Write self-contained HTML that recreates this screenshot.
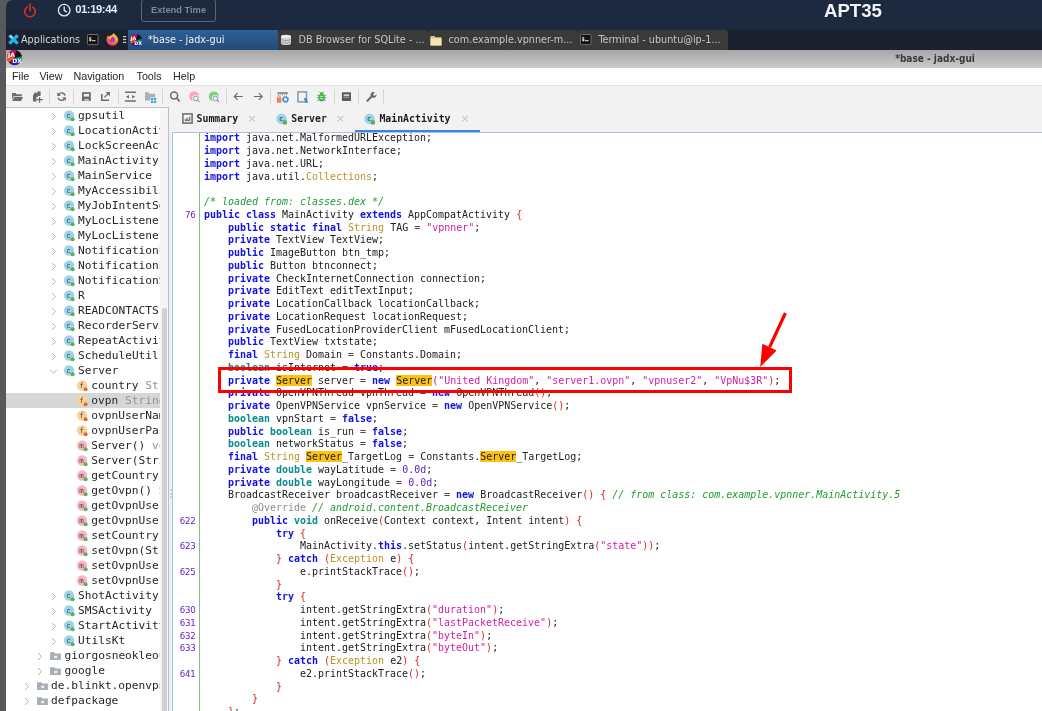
<!DOCTYPE html>
<html lang="en">
<head>
<meta charset="utf-8">
<title>*base - jadx-gui</title>
<style>
*{box-sizing:border-box;margin:0;padding:0}
html,body{width:1042px;height:711px;overflow:hidden}
body{position:relative;will-change:transform;background:#58595c;font-family:"Liberation Sans","DejaVu Sans",sans-serif;font-size:11px;color:#222}
.abs{position:absolute}
svg{display:block;overflow:visible}
/* top lab bar */
#top{left:6px;top:0;width:1036px;height:31px;background:#1d293e;border-top-left-radius:7px}
#top .clk{left:69.2px;top:2px;color:#e3eaf5;font-weight:bold;font-size:11.3px;letter-spacing:-0.45px;line-height:14px;white-space:nowrap}
#top .ext{left:135px;top:-1px;width:75px;height:22.5px;border:1px solid #5b6675;border-radius:3px;color:#7d8796;font-weight:bold;font-size:9.3px;line-height:20.5px;text-align:center;white-space:nowrap}
#top .apt{left:818px;top:-0.5px;color:#f2f4f7;font-weight:bold;font-size:18.6px;white-space:nowrap;line-height:22px}
/* xfce panel */
#panel{left:6px;top:30px;width:1036px;height:20px;background:#1c2130;font-family:"DejaVu Sans Condensed","DejaVu Sans","Liberation Sans",sans-serif;font-size:10.75px;color:#d6d6d6;white-space:nowrap}
#panel .it{position:absolute;top:0;height:19.5px;line-height:19.5px;overflow:hidden}
#panel .win{background:#3a3a3a;color:#c4c4c4;border-radius:3px 3px 0 0}
#panel .act{background:linear-gradient(#2f5f95,#244a78);color:#f0f0f0}
/* jadx window */
#title{left:6px;top:50px;width:1036px;height:18px;background:linear-gradient(#a6a6a6 0%,#b7b7b7 45%,#cacaca 100%);font-family:"DejaVu Sans Condensed","DejaVu Sans","Liberation Sans",sans-serif;font-weight:bold;font-size:10px;color:#3a3a3a;white-space:nowrap}
#menu{left:6px;top:68px;width:1036px;height:18px;background:#fff;border-bottom:1px solid #e3e3e3;font-size:10.75px;color:#262626;white-space:nowrap}
#menu span{position:absolute;top:0;line-height:17.5px}
#tool{left:6px;top:86px;width:1036px;height:22px;background:#f2f2f2}
#tool .sep{position:absolute;top:3px;width:1px;height:15px;background:#d6d6d6}
#tool svg{position:absolute}
/* tree */
#treewrap{left:6px;top:107px;width:163px;height:604px;background:#fff;border-top:1px solid #c4c4c4;border-right:1px solid #bdbdbd;overflow:hidden}
#tree{position:absolute;left:-6px;top:0.4px;width:159.6px;height:620px;overflow:hidden;font-family:"DejaVu Sans Mono","Liberation Mono",monospace;font-size:11.2px;color:#262626;white-space:nowrap}
.tr{position:relative;height:15.0px;line-height:15.0px}
.tr.sel{background:#d6d6d6}
.tr .tl{position:absolute;top:0}
.tr .ex{color:#939393}
.tr .chv{position:absolute;top:3.2px}
.tr .ico{position:absolute;top:0.6px}
#tsb{left:153.6px;top:0;width:8.4px;height:604px;background:#f5f5f5}
#tsb i{position:absolute;left:2.9px;top:199.8px;width:4.5px;height:420px;background:#d0d0d0;border-radius:2px}
#split{left:169px;top:107px;width:3.5px;height:604px;background:#f0f0f0}
/* tabs */
#tabs{left:169px;top:107px;width:873px;height:25px;background:#f2f2f2;font-family:"DejaVu Sans Mono","Liberation Mono",monospace;font-weight:bold;font-size:9.85px;color:#1c1c1c;white-space:nowrap}
#tabs span{position:absolute;top:0;line-height:23.5px}
#tabs .x{font-family:"DejaVu Sans","Liberation Sans",sans-serif;font-weight:normal;color:#c4c4c4;font-size:11px}
#tabs svg{position:absolute}
/* editor */
#ed{left:172px;top:132px;width:870px;height:579px;background:#fff;border-left:1px solid #a9c3df;border-top:1px solid #a9c3df;overflow:hidden}
#gut{left:0;top:0;padding-top:0;width:26.5px;height:579px;border-right:1px solid #7fbf86;font-family:"DejaVu Sans","Liberation Sans",sans-serif;font-size:8.6px;color:#6a1bd1;text-align:right;padding-right:3px;letter-spacing:-0.2px}
#gut .gl{height:12.75px;line-height:12.75px;position:relative;top:-0.7px}
#code{left:31px;top:-0.7px;width:840px;font-family:"DejaVu Sans Mono","Liberation Mono",monospace;font-size:9.97px;color:#202020}
#code .cl{height:12.75px;line-height:12.75px;white-space:pre}
#code b{font-weight:bold}
.k{color:#1212e4}.d{color:#0a8c8c}.f{color:#b69228}.s{color:#cf1fa2}.n{color:#5f1ccb}.c{color:#1f9c32;font-style:italic}.a{color:#8e8e8e}.p{color:#dc2424}.o{color:#5a3c3c}
mark{background:#fcc20f;color:inherit}
#box{left:218px;top:367px;width:574px;height:26px;border:3px solid #ff0000}
#arrow{left:0;top:0}
</style>
</head>
<body>
<!-- ============ lab top bar ============ -->
<div id="top" class="abs">
  <svg class="abs" style="left:16px;top:2.6px" width="16" height="16" viewBox="0 0 16 16"><path d="M5.2 4.1 A5.3 5.3 0 1 0 10.8 4.1" fill="none" stroke="#d92b2b" stroke-width="1.7" stroke-linecap="round"/><path d="M8 1.4 V7.4" stroke="#d92b2b" stroke-width="1.7" stroke-linecap="round"/></svg>
  <svg class="abs" style="left:51.3px;top:3.2px" width="14.4" height="14.4" viewBox="0 0 14 14"><circle cx="7" cy="7" r="5.6" fill="none" stroke="#e6eaf0" stroke-width="1.3"/><path d="M7 3.8 V7.2 L9.2 8.6" fill="none" stroke="#e6eaf0" stroke-width="1.3" stroke-linecap="round" stroke-linejoin="round"/></svg>
  <div class="abs clk">01:19:44</div>
  <div class="abs ext">Extend Time</div>
  <div class="abs apt">APT35</div>
</div>
<!-- ============ xfce panel ============ -->
<div id="panel" class="abs">
  <svg class="abs" style="left:1.5px;top:4px" width="11" height="11" viewBox="0 0 12 12"><path d="M1.5 1.5 L10.5 10.5 M10.5 1.5 L1.5 10.5" stroke="#25b4e6" stroke-width="3.7" stroke-linecap="butt"/><path d="M2.2 1.6 L5 4.4" stroke="#b9ecfb" stroke-width="1.4"/></svg>
  <div class="it" style="left:15px">Applications</div>
  <svg class="abs" style="left:80.6px;top:3.8px" width="11.6" height="11.2" viewBox="0 0 11.6 11.2"><rect x="0.5" y="0.5" width="10.6" height="10.2" rx="1" fill="#121212" stroke="#6f6f6f"/><text x="1.6" y="6.6" font-family="'DejaVu Sans Mono','Liberation Mono',monospace" font-weight="bold" font-size="5.6" fill="#f0f0f0">$</text><rect x="5" y="6.2" width="3.6" height="1" fill="#e8e8e8"/></svg>
  <svg class="abs" style="left:99.6px;top:3.4px" width="12.8" height="12.8" viewBox="0 0 13 13"><defs><linearGradient id="ff" x1="0.8" y1="0.05" x2="0.25" y2="1"><stop offset="0" stop-color="#ffe24a"/><stop offset="0.45" stop-color="#ff8a1e"/><stop offset="1" stop-color="#ff2f6e"/></linearGradient></defs><path d="M6.5 1.8 C7.2 0.6 8 0.2 8 0.2 C8.4 1.6 11.2 2.6 12.2 5.6 C13.2 9.2 10.4 12.8 6.6 12.8 C3 12.8 0.4 10 0.5 6.6 C0.5 4.6 1.4 3 2.2 2.2 C2.4 3 2.8 3.4 3.2 3.6 C4 2.6 5.4 2.2 6.5 1.8 Z" fill="url(#ff)"/><circle cx="6.3" cy="6.5" r="2.7" fill="#8a3fe6"/><path d="M2.8 4 C4 3.3 5.6 3.6 6.4 4.6 C5 4.6 4.6 5.8 5.2 6.6 C4 6.8 2.8 5.4 2.8 4 Z" fill="#ffb52e"/></svg>
  <svg class="abs" style="left:116.9px;top:6px" width="3.2" height="8" viewBox="0 0 3.2 8"><rect x="0" y="0" width="3.2" height="1.2" fill="#c9ccd1"/><rect x="0" y="2.9" width="3.2" height="1.2" fill="#c9ccd1"/><rect x="0" y="5.8" width="3.2" height="1.2" fill="#c9ccd1"/></svg>
  <div class="it act" style="left:121.5px;width:150px;padding-left:20.5px">*base - jadx-gui</div>
  <div class="it win" style="left:272px;width:150px;padding-left:20.5px">DB Browser for SQLite - ...</div>
  <div class="it win" style="left:422px;width:150px;padding-left:20.5px">com.example.vpnner-m...</div>
  <div class="it win" style="left:572px;width:150px;padding-left:20.5px">Terminal - ubuntu@ip-1...</div>
  <!-- jadx mini icon -->
  <svg class="abs" style="left:123.6px;top:3.7px" width="12" height="12" viewBox="0 0 16 16"><circle cx="8" cy="8" r="8" fill="#17101f"/><path d="M8 8.4 L1.2 3.8 A8 8 0 0 1 9.6 0.2 Z" fill="#c2185b"/><path d="M8 8.4 L15.9 6.6 A8 8 0 0 1 13.4 13.9 Z" fill="#0f8f78"/><path d="M8 8.4 L13.4 13.9 A8 8 0 0 1 3.6 14.7 Z" fill="#3a16c0"/><path d="M8 8.4 L2.2 13.5 A8 8 0 0 1 0.3 5.8 L1.2 3.8 Z" fill="#f4511e"/><text x="1" y="7.8" font-family="'DejaVu Sans','Liberation Sans',sans-serif" font-weight="bold" font-size="6.4" fill="#fff">JA</text><text x="5.6" y="14" font-family="'DejaVu Sans','Liberation Sans',sans-serif" font-weight="bold" font-size="6.4" fill="#fff">DX</text></svg>
  <!-- db icon -->
  <svg class="abs" style="left:274px;top:4px" width="12" height="12" viewBox="0 0 12 12"><path d="M1 2.4 C1 0.4 11 0.4 11 2.4 V9.6 C11 11.6 1 11.6 1 9.6 Z" fill="#cfcfcf"/><ellipse cx="6" cy="2.4" rx="5" ry="1.7" fill="#efefef"/><path d="M1 5 C1 7 11 7 11 5 M1 7.6 C1 9.6 11 9.6 11 7.6" fill="none" stroke="#8e8e8e" stroke-width="0.8"/></svg>
  <!-- folder icon -->
  <svg class="abs" style="left:424px;top:4.5px" width="12" height="11" viewBox="0 0 12 11"><path d="M0.5 1 H4.5 L5.5 2.2 H11.5 V10.5 H0.5 Z" fill="#d9c48f"/><rect x="0.5" y="3.4" width="11" height="7.1" fill="#f3e3b4"/></svg>
  <!-- terminal icon -->
  <svg class="abs" style="left:574.2px;top:3.8px" width="11.6" height="11.2" viewBox="0 0 11.6 11.2"><rect x="0.5" y="0.5" width="10.6" height="10.2" rx="1" fill="#121212" stroke="#6f6f6f"/><text x="1.6" y="6.6" font-family="'DejaVu Sans Mono','Liberation Mono',monospace" font-weight="bold" font-size="5.6" fill="#f0f0f0">$</text><rect x="5" y="6.2" width="3.6" height="1" fill="#e8e8e8"/></svg>
</div>
<!-- ============ window title ============ -->
<div id="title" class="abs">
  <svg class="abs" style="left:0.8px;top:0.1px" width="15" height="15" viewBox="0 0 16 16"><circle cx="8" cy="8" r="8" fill="#17101f"/><path d="M8 8.4 L1.2 3.8 A8 8 0 0 1 9.6 0.2 Z" fill="#c2185b"/><path d="M8 8.4 L15.9 6.6 A8 8 0 0 1 13.4 13.9 Z" fill="#0f8f78"/><path d="M8 8.4 L13.4 13.9 A8 8 0 0 1 3.6 14.7 Z" fill="#3a16c0"/><path d="M8 8.4 L2.2 13.5 A8 8 0 0 1 0.3 5.8 L1.2 3.8 Z" fill="#f4511e"/><text x="1" y="7.8" font-family="'DejaVu Sans','Liberation Sans',sans-serif" font-weight="bold" font-size="6.4" fill="#fff">JA</text><text x="5.6" y="14" font-family="'DejaVu Sans','Liberation Sans',sans-serif" font-weight="bold" font-size="6.4" fill="#fff">DX</text></svg>
  <div class="abs" style="left:889.2px;top:0;line-height:18px">*base - jadx-gui</div>
</div>
<!-- ============ menu ============ -->
<div id="menu" class="abs">
  <span style="left:6px">File</span><span style="left:33.4px">View</span><span style="left:67.5px">Navigation</span><span style="left:130.5px">Tools</span><span style="left:167px">Help</span>
</div>
<!-- ============ toolbar ============ -->
<div id="tool" class="abs">
<div class="sep" style="left:42.8px"></div>
<div class="sep" style="left:67.0px"></div>
<div class="sep" style="left:111.8px"></div>
<div class="sep" style="left:155.9px"></div>
<div class="sep" style="left:219.9px"></div>
<div class="sep" style="left:263.9px"></div>
<div class="sep" style="left:328.1px"></div>
<div class="sep" style="left:351.9px"></div>
<div class="sep" style="left:376.9px"></div>
<svg style="left:0;top:0" width="1036" height="22" viewBox="6 86 1036 22"><path d="M12 93 H15.6 L16.4 94.3 H21.8 V96.3 H13.5 L12 99.8 Z" fill="#6b6b6b"/><path d="M14 97.1 H23.1 L21 100.9 H12.2 Z" fill="#6b6b6b"/><path d="M37.3 91.4 H40.6 V96 H37.3 Z" fill="#6b6b6b"/><path d="M34.9 93 H37.9 V101.6 H33 V94.9 Z" fill="#6b6b6b"/><path d="M35.6 91.6 V93.4 H33.8 Z" fill="#6b6b6b"/><path d="M36.4 97 H42.9 V102.2 H36.4 Z" fill="#f2f2f2"/><path d="M39.6 97 V102.8 M36.7 99.7 H42.9" stroke="#6b6b6b" stroke-width="1.2" fill="none"/><path d="M65.2 95.6 A3.7 3.7 0 0 0 58.8 94.2" fill="none" stroke="#6b6b6b" stroke-width="1.4"/><path d="M57.3 92.3 V95.9 H60.9 Z" fill="#6b6b6b"/><path d="M58 97.6 A3.7 3.7 0 0 0 64.4 99" fill="none" stroke="#6b6b6b" stroke-width="1.4"/><path d="M65.9 100.9 V97.3 H62.3 Z" fill="#6b6b6b"/><rect x="82" y="92.2" width="8.8" height="8.8" fill="#6b6b6b"/><rect x="83.7" y="93.9" width="5.4" height="2.7" fill="#ececec"/><rect x="84.6" y="99" width="3.9" height="2.1" fill="#ececec"/><rect x="85.4" y="99.8" width="2.3" height="0.8" fill="#6b6b6b"/><path d="M101.8 94 V100.3 H109" fill="none" stroke="#6b6b6b" stroke-width="1.5"/><path d="M104.4 97.4 L109.2 92.6" stroke="#6b6b6b" stroke-width="1.3"/><path d="M105.6 92.1 H109.9 V96.4 Z" fill="#6b6b6b"/><path d="M125.1 92.15 H135.9 M125.1 101.05 H135.9" stroke="#6b6b6b" stroke-width="1.5"/><path d="M126 96.8 L129 95 V98.6 Z M135.1 96.8 L132.1 95 V98.6 Z" fill="#6b6b6b"/><path d="M145 92.3 H148.4 L149.6 93.7 H155.2 V100.6 H145 Z" fill="#a7b1bb"/><rect x="150.4" y="97.3" width="6.2" height="6.1" fill="#f2f2f2"/><rect x="151" y="97.9" width="2.2" height="2.2" fill="#2fa8e4"/><rect x="153.9" y="97.9" width="2.2" height="2.2" fill="#2fa8e4"/><rect x="151" y="100.8" width="2.2" height="2.2" fill="#2fa8e4"/><rect x="153.9" y="100.8" width="2.2" height="2.2" fill="#2fa8e4"/><circle cx="174.1" cy="95.5" r="3.5" fill="none" stroke="#6b6b6b" stroke-width="1.5"/><path d="M176.6 98 L179.6 101.4" stroke="#6b6b6b" stroke-width="1.7"/><circle cx="194.2" cy="96.4" r="5" fill="#f6a8b6"/><circle cx="195.8" cy="98.5" r="3.6" fill="#f2f2f2"/><path d="M196.2 100.4 L198.2 102.6 L200.6 104 L199.6 98.6 Z" fill="#f2f2f2"/><circle cx="195.8" cy="98.5" r="2.3" fill="none" stroke="#8c9aa8" stroke-width="1"/><path d="M197.5 100.2 L199.6 102.2" stroke="#8c9aa8" stroke-width="1.1"/><circle cx="213.8" cy="96.4" r="5" fill="#84cc80"/><circle cx="215.4" cy="98.5" r="3.6" fill="#f2f2f2"/><path d="M215.8 100.4 L217.8 102.6 L220.2 104 L219.2 98.6 Z" fill="#f2f2f2"/><circle cx="215.4" cy="98.5" r="2.3" fill="none" stroke="#8c9aa8" stroke-width="1"/><path d="M217.1 100.2 L219.2 102.2" stroke="#8c9aa8" stroke-width="1.1"/><path d="M234.4 96.5 H242.7 M237.6 93.2 L234.3 96.5 L237.6 99.8" fill="none" stroke="#6b6b6b" stroke-width="1.2"/><path d="M253.8 96.5 H262.1 M258.9 93.2 L262.2 96.5 L258.9 99.8" fill="none" stroke="#6b6b6b" stroke-width="1.2"/><rect x="277.4" y="92" width="10.5" height="2" fill="#8a98a6"/><path d="M278.4 94 V95.6 M280.4 94 V95.2 M282.4 94 V95.6 M284.4 94 V95.2 M286.4 94 V95.6" stroke="#8a98a6" stroke-width="0.9"/><rect x="276.9" y="97.6" width="4.4" height="5.1" rx="0.5" fill="#f2814e"/><path d="M277.9 97.8 V96.9 A1.2 1.2 0 0 1 280.3 96.9 V97.8" fill="none" stroke="#f2814e" stroke-width="0.9"/><circle cx="285.5" cy="99.4" r="2.2" fill="none" stroke="#3b93d8" stroke-width="1.3"/><circle cx="285.5" cy="99.4" r="2.9" fill="none" stroke="#3b93d8" stroke-width="1.2" stroke-dasharray="1.1 1.18"/><rect x="297.9" y="91.9" width="8.6" height="10" fill="none" stroke="#8e9dab" stroke-width="1.6"/><path d="M302.6 97.2 H308.2 V103.4 H302.6 Z" fill="#f2f2f2" opacity="0"/><path d="M303.7 98 L306.4 98.6 L308 102.8 L305.6 102.6 Z" fill="#2a86c8"/><ellipse cx="321.6" cy="97.6" rx="3.1" ry="3.9" fill="#4caf50"/><ellipse cx="321.6" cy="93.8" rx="2" ry="1.5" fill="#4caf50"/><path d="M317.2 95 L319.2 96 M326 95 L324 96 M317 97.8 H319 M326.2 97.8 H324.2 M317.4 100.8 L319.2 99.6 M325.8 100.8 L324 99.6 M319.6 91.6 L320.6 92.8 M323.6 91.6 L322.6 92.8" stroke="#4caf50" stroke-width="1"/><path d="M320.2 96.4 H323 M320.2 98.6 H323" stroke="#e6f4e6" stroke-width="0.9"/><rect x="341.9" y="92.2" width="9.1" height="8.7" rx="0.5" fill="#5c5c5c"/><rect x="343.7" y="94.4" width="5.5" height="1.5" fill="#e2e2e2"/><rect x="343.7" y="96.7" width="5.5" height="1" fill="#a9a9a9"/><path d="M367.4 100.7 L371.8 96.3" stroke="#6b6b6b" stroke-width="2.1" stroke-linecap="round"/><path d="M376.4 94.2 L374.6 96 L373 94.6 L374.6 92.8 L374 91.9 A3 3 0 1 0 376.4 94.2 Z" fill="#6b6b6b"/></svg>
</div>
<!-- ============ tree ============ -->
<div id="treewrap" class="abs">
  <div id="tree">
<div class="tr"><svg class="chv" style="left:48.6px" width="9" height="9" viewBox="0 0 9 9"><path d="M3 1 L6.5 4.5 L3 8" fill="none" stroke="#adadad" stroke-width="0.95"/></svg><svg class="ico" style="left:62.8px" width="14" height="14" viewBox="0 0 14 14"><circle cx="6.1" cy="6.5" r="5.15" fill="#9ed2e8"/><text x="5.6" y="9.2" font-family="'DejaVu Sans Mono','Liberation Mono',monospace" font-size="7.5" fill="#2f5560" text-anchor="middle">c</text><circle cx="9.6" cy="10.2" r="2.05" fill="#59b14f"/></svg><span class="tl" style="left:78.0px">gpsutil</span></div>
<div class="tr"><svg class="chv" style="left:48.6px" width="9" height="9" viewBox="0 0 9 9"><path d="M3 1 L6.5 4.5 L3 8" fill="none" stroke="#adadad" stroke-width="0.95"/></svg><svg class="ico" style="left:62.8px" width="14" height="14" viewBox="0 0 14 14"><circle cx="6.1" cy="6.5" r="5.15" fill="#9ed2e8"/><text x="5.6" y="9.2" font-family="'DejaVu Sans Mono','Liberation Mono',monospace" font-size="7.5" fill="#2f5560" text-anchor="middle">c</text><circle cx="9.6" cy="10.2" r="2.05" fill="#59b14f"/></svg><span class="tl" style="left:78.0px">LocationActivity</span></div>
<div class="tr"><svg class="chv" style="left:48.6px" width="9" height="9" viewBox="0 0 9 9"><path d="M3 1 L6.5 4.5 L3 8" fill="none" stroke="#adadad" stroke-width="0.95"/></svg><svg class="ico" style="left:62.8px" width="14" height="14" viewBox="0 0 14 14"><circle cx="6.1" cy="6.5" r="5.15" fill="#9ed2e8"/><text x="5.6" y="9.2" font-family="'DejaVu Sans Mono','Liberation Mono',monospace" font-size="7.5" fill="#2f5560" text-anchor="middle">c</text><circle cx="9.6" cy="10.2" r="2.05" fill="#59b14f"/></svg><span class="tl" style="left:78.0px">LockScreenActivity</span></div>
<div class="tr"><svg class="chv" style="left:48.6px" width="9" height="9" viewBox="0 0 9 9"><path d="M3 1 L6.5 4.5 L3 8" fill="none" stroke="#adadad" stroke-width="0.95"/></svg><svg class="ico" style="left:62.8px" width="14" height="14" viewBox="0 0 14 14"><circle cx="6.1" cy="6.5" r="5.15" fill="#9ed2e8"/><text x="5.6" y="9.2" font-family="'DejaVu Sans Mono','Liberation Mono',monospace" font-size="7.5" fill="#2f5560" text-anchor="middle">c</text><circle cx="9.6" cy="10.2" r="2.05" fill="#59b14f"/></svg><span class="tl" style="left:78.0px">MainActivity</span></div>
<div class="tr"><svg class="chv" style="left:48.6px" width="9" height="9" viewBox="0 0 9 9"><path d="M3 1 L6.5 4.5 L3 8" fill="none" stroke="#adadad" stroke-width="0.95"/></svg><svg class="ico" style="left:62.8px" width="14" height="14" viewBox="0 0 14 14"><circle cx="6.1" cy="6.5" r="5.15" fill="#9ed2e8"/><text x="5.6" y="9.2" font-family="'DejaVu Sans Mono','Liberation Mono',monospace" font-size="7.5" fill="#2f5560" text-anchor="middle">c</text><circle cx="9.6" cy="10.2" r="2.05" fill="#59b14f"/></svg><span class="tl" style="left:78.0px">MainService</span></div>
<div class="tr"><svg class="chv" style="left:48.6px" width="9" height="9" viewBox="0 0 9 9"><path d="M3 1 L6.5 4.5 L3 8" fill="none" stroke="#adadad" stroke-width="0.95"/></svg><svg class="ico" style="left:62.8px" width="14" height="14" viewBox="0 0 14 14"><circle cx="6.1" cy="6.5" r="5.15" fill="#9ed2e8"/><text x="5.6" y="9.2" font-family="'DejaVu Sans Mono','Liberation Mono',monospace" font-size="7.5" fill="#2f5560" text-anchor="middle">c</text><circle cx="9.6" cy="10.2" r="2.05" fill="#59b14f"/></svg><span class="tl" style="left:78.0px">MyAccessibilityService</span></div>
<div class="tr"><svg class="chv" style="left:48.6px" width="9" height="9" viewBox="0 0 9 9"><path d="M3 1 L6.5 4.5 L3 8" fill="none" stroke="#adadad" stroke-width="0.95"/></svg><svg class="ico" style="left:62.8px" width="14" height="14" viewBox="0 0 14 14"><circle cx="6.1" cy="6.5" r="5.15" fill="#9ed2e8"/><text x="5.6" y="9.2" font-family="'DejaVu Sans Mono','Liberation Mono',monospace" font-size="7.5" fill="#2f5560" text-anchor="middle">c</text><circle cx="9.6" cy="10.2" r="2.05" fill="#59b14f"/></svg><span class="tl" style="left:78.0px">MyJobIntentService</span></div>
<div class="tr"><svg class="chv" style="left:48.6px" width="9" height="9" viewBox="0 0 9 9"><path d="M3 1 L6.5 4.5 L3 8" fill="none" stroke="#adadad" stroke-width="0.95"/></svg><svg class="ico" style="left:62.8px" width="14" height="14" viewBox="0 0 14 14"><circle cx="6.1" cy="6.5" r="5.15" fill="#9ed2e8"/><text x="5.6" y="9.2" font-family="'DejaVu Sans Mono','Liberation Mono',monospace" font-size="7.5" fill="#2f5560" text-anchor="middle">c</text><circle cx="9.6" cy="10.2" r="2.05" fill="#59b14f"/></svg><span class="tl" style="left:78.0px">MyLocListener</span></div>
<div class="tr"><svg class="chv" style="left:48.6px" width="9" height="9" viewBox="0 0 9 9"><path d="M3 1 L6.5 4.5 L3 8" fill="none" stroke="#adadad" stroke-width="0.95"/></svg><svg class="ico" style="left:62.8px" width="14" height="14" viewBox="0 0 14 14"><circle cx="6.1" cy="6.5" r="5.15" fill="#9ed2e8"/><text x="5.6" y="9.2" font-family="'DejaVu Sans Mono','Liberation Mono',monospace" font-size="7.5" fill="#2f5560" text-anchor="middle">c</text><circle cx="9.6" cy="10.2" r="2.05" fill="#59b14f"/></svg><span class="tl" style="left:78.0px">MyLocListener2</span></div>
<div class="tr"><svg class="chv" style="left:48.6px" width="9" height="9" viewBox="0 0 9 9"><path d="M3 1 L6.5 4.5 L3 8" fill="none" stroke="#adadad" stroke-width="0.95"/></svg><svg class="ico" style="left:62.8px" width="14" height="14" viewBox="0 0 14 14"><circle cx="6.1" cy="6.5" r="5.15" fill="#9ed2e8"/><text x="5.6" y="9.2" font-family="'DejaVu Sans Mono','Liberation Mono',monospace" font-size="7.5" fill="#2f5560" text-anchor="middle">c</text><circle cx="9.6" cy="10.2" r="2.05" fill="#59b14f"/></svg><span class="tl" style="left:78.0px">NotificationListener</span></div>
<div class="tr"><svg class="chv" style="left:48.6px" width="9" height="9" viewBox="0 0 9 9"><path d="M3 1 L6.5 4.5 L3 8" fill="none" stroke="#adadad" stroke-width="0.95"/></svg><svg class="ico" style="left:62.8px" width="14" height="14" viewBox="0 0 14 14"><circle cx="6.1" cy="6.5" r="5.15" fill="#9ed2e8"/><text x="5.6" y="9.2" font-family="'DejaVu Sans Mono','Liberation Mono',monospace" font-size="7.5" fill="#2f5560" text-anchor="middle">c</text><circle cx="9.6" cy="10.2" r="2.05" fill="#59b14f"/></svg><span class="tl" style="left:78.0px">NotificationListener2</span></div>
<div class="tr"><svg class="chv" style="left:48.6px" width="9" height="9" viewBox="0 0 9 9"><path d="M3 1 L6.5 4.5 L3 8" fill="none" stroke="#adadad" stroke-width="0.95"/></svg><svg class="ico" style="left:62.8px" width="14" height="14" viewBox="0 0 14 14"><circle cx="6.1" cy="6.5" r="5.15" fill="#9ed2e8"/><text x="5.6" y="9.2" font-family="'DejaVu Sans Mono','Liberation Mono',monospace" font-size="7.5" fill="#2f5560" text-anchor="middle">c</text><circle cx="9.6" cy="10.2" r="2.05" fill="#59b14f"/></svg><span class="tl" style="left:78.0px">NotificationService</span></div>
<div class="tr"><svg class="chv" style="left:48.6px" width="9" height="9" viewBox="0 0 9 9"><path d="M3 1 L6.5 4.5 L3 8" fill="none" stroke="#adadad" stroke-width="0.95"/></svg><svg class="ico" style="left:62.8px" width="14" height="14" viewBox="0 0 14 14"><circle cx="6.1" cy="6.5" r="5.15" fill="#9ed2e8"/><text x="5.6" y="9.2" font-family="'DejaVu Sans Mono','Liberation Mono',monospace" font-size="7.5" fill="#2f5560" text-anchor="middle">c</text><circle cx="9.6" cy="10.2" r="2.05" fill="#59b14f"/></svg><span class="tl" style="left:78.0px">R</span></div>
<div class="tr"><svg class="chv" style="left:48.6px" width="9" height="9" viewBox="0 0 9 9"><path d="M3 1 L6.5 4.5 L3 8" fill="none" stroke="#adadad" stroke-width="0.95"/></svg><svg class="ico" style="left:62.8px" width="14" height="14" viewBox="0 0 14 14"><circle cx="6.1" cy="6.5" r="5.15" fill="#9ed2e8"/><text x="5.6" y="9.2" font-family="'DejaVu Sans Mono','Liberation Mono',monospace" font-size="7.5" fill="#2f5560" text-anchor="middle">c</text><circle cx="9.6" cy="10.2" r="2.05" fill="#59b14f"/></svg><span class="tl" style="left:78.0px">READCONTACTS</span></div>
<div class="tr"><svg class="chv" style="left:48.6px" width="9" height="9" viewBox="0 0 9 9"><path d="M3 1 L6.5 4.5 L3 8" fill="none" stroke="#adadad" stroke-width="0.95"/></svg><svg class="ico" style="left:62.8px" width="14" height="14" viewBox="0 0 14 14"><circle cx="6.1" cy="6.5" r="5.15" fill="#9ed2e8"/><text x="5.6" y="9.2" font-family="'DejaVu Sans Mono','Liberation Mono',monospace" font-size="7.5" fill="#2f5560" text-anchor="middle">c</text><circle cx="9.6" cy="10.2" r="2.05" fill="#59b14f"/></svg><span class="tl" style="left:78.0px">RecorderService</span></div>
<div class="tr"><svg class="chv" style="left:48.6px" width="9" height="9" viewBox="0 0 9 9"><path d="M3 1 L6.5 4.5 L3 8" fill="none" stroke="#adadad" stroke-width="0.95"/></svg><svg class="ico" style="left:62.8px" width="14" height="14" viewBox="0 0 14 14"><circle cx="6.1" cy="6.5" r="5.15" fill="#9ed2e8"/><text x="5.6" y="9.2" font-family="'DejaVu Sans Mono','Liberation Mono',monospace" font-size="7.5" fill="#2f5560" text-anchor="middle">c</text><circle cx="9.6" cy="10.2" r="2.05" fill="#59b14f"/></svg><span class="tl" style="left:78.0px">RepeatActivity</span></div>
<div class="tr"><svg class="chv" style="left:48.6px" width="9" height="9" viewBox="0 0 9 9"><path d="M3 1 L6.5 4.5 L3 8" fill="none" stroke="#adadad" stroke-width="0.95"/></svg><svg class="ico" style="left:62.8px" width="14" height="14" viewBox="0 0 14 14"><circle cx="6.1" cy="6.5" r="5.15" fill="#9ed2e8"/><text x="5.6" y="9.2" font-family="'DejaVu Sans Mono','Liberation Mono',monospace" font-size="7.5" fill="#2f5560" text-anchor="middle">c</text><circle cx="9.6" cy="10.2" r="2.05" fill="#59b14f"/></svg><span class="tl" style="left:78.0px">ScheduleUtils</span></div>
<div class="tr"><svg class="chv" style="left:48.8px" width="9" height="9" viewBox="0 0 9 9"><path d="M1.2 2.8 L4.5 6.1 L7.8 2.8" fill="none" stroke="#adadad" stroke-width="0.95"/></svg><svg class="ico" style="left:62.8px" width="14" height="14" viewBox="0 0 14 14"><circle cx="6.1" cy="6.5" r="5.15" fill="#9ed2e8"/><text x="5.6" y="9.2" font-family="'DejaVu Sans Mono','Liberation Mono',monospace" font-size="7.5" fill="#2f5560" text-anchor="middle">c</text><circle cx="9.6" cy="10.2" r="2.05" fill="#59b14f"/></svg><span class="tl" style="left:78.0px">Server</span></div>
<div class="tr"><svg class="ico" style="left:75.7px" width="14" height="14" viewBox="0 0 14 14"><circle cx="6.1" cy="6.5" r="5.15" fill="#f5d49a"/><text x="5.6" y="9.2" font-family="'DejaVu Sans Mono','Liberation Mono',monospace" font-size="7.5" fill="#5e4a2a" text-anchor="middle">f</text><circle cx="9.6" cy="10.2" r="2.05" fill="#e8692c"/></svg><span class="tl" style="left:91.3px">country<span class="ex"> String</span></span></div>
<div class="tr sel"><svg class="ico" style="left:75.7px" width="14" height="14" viewBox="0 0 14 14"><circle cx="6.1" cy="6.5" r="5.15" fill="#f5d49a"/><text x="5.6" y="9.2" font-family="'DejaVu Sans Mono','Liberation Mono',monospace" font-size="7.5" fill="#5e4a2a" text-anchor="middle">f</text><circle cx="9.6" cy="10.2" r="2.05" fill="#e8692c"/></svg><span class="tl" style="left:91.3px">ovpn<span class="ex"> String</span></span></div>
<div class="tr"><svg class="ico" style="left:75.7px" width="14" height="14" viewBox="0 0 14 14"><circle cx="6.1" cy="6.5" r="5.15" fill="#f5d49a"/><text x="5.6" y="9.2" font-family="'DejaVu Sans Mono','Liberation Mono',monospace" font-size="7.5" fill="#5e4a2a" text-anchor="middle">f</text><circle cx="9.6" cy="10.2" r="2.05" fill="#e8692c"/></svg><span class="tl" style="left:91.3px">ovpnUserName<span class="ex"> String</span></span></div>
<div class="tr"><svg class="ico" style="left:75.7px" width="14" height="14" viewBox="0 0 14 14"><circle cx="6.1" cy="6.5" r="5.15" fill="#f5d49a"/><text x="5.6" y="9.2" font-family="'DejaVu Sans Mono','Liberation Mono',monospace" font-size="7.5" fill="#5e4a2a" text-anchor="middle">f</text><circle cx="9.6" cy="10.2" r="2.05" fill="#e8692c"/></svg><span class="tl" style="left:91.3px">ovpnUserPassword<span class="ex"> String</span></span></div>
<div class="tr"><svg class="ico" style="left:75.7px" width="14" height="14" viewBox="0 0 14 14"><circle cx="6.1" cy="6.5" r="5.15" fill="#f7b6c4"/><text x="5.6" y="9.2" font-family="'DejaVu Sans Mono','Liberation Mono',monospace" font-size="7.5" fill="#5e3038" text-anchor="middle">m</text><circle cx="9.6" cy="10.2" r="2.05" fill="#59b14f"/></svg><span class="tl" style="left:91.3px">Server()<span class="ex"> void</span></span></div>
<div class="tr"><svg class="ico" style="left:75.7px" width="14" height="14" viewBox="0 0 14 14"><circle cx="6.1" cy="6.5" r="5.15" fill="#f7b6c4"/><text x="5.6" y="9.2" font-family="'DejaVu Sans Mono','Liberation Mono',monospace" font-size="7.5" fill="#5e3038" text-anchor="middle">m</text><circle cx="9.6" cy="10.2" r="2.05" fill="#59b14f"/></svg><span class="tl" style="left:91.3px">Server(String, String, String, String)<span class="ex"> void</span></span></div>
<div class="tr"><svg class="ico" style="left:75.7px" width="14" height="14" viewBox="0 0 14 14"><circle cx="6.1" cy="6.5" r="5.15" fill="#f7b6c4"/><text x="5.6" y="9.2" font-family="'DejaVu Sans Mono','Liberation Mono',monospace" font-size="7.5" fill="#5e3038" text-anchor="middle">m</text><circle cx="9.6" cy="10.2" r="2.05" fill="#59b14f"/></svg><span class="tl" style="left:91.3px">getCountry()<span class="ex"> String</span></span></div>
<div class="tr"><svg class="ico" style="left:75.7px" width="14" height="14" viewBox="0 0 14 14"><circle cx="6.1" cy="6.5" r="5.15" fill="#f7b6c4"/><text x="5.6" y="9.2" font-family="'DejaVu Sans Mono','Liberation Mono',monospace" font-size="7.5" fill="#5e3038" text-anchor="middle">m</text><circle cx="9.6" cy="10.2" r="2.05" fill="#59b14f"/></svg><span class="tl" style="left:91.3px">getOvpn()<span class="ex"> String</span></span></div>
<div class="tr"><svg class="ico" style="left:75.7px" width="14" height="14" viewBox="0 0 14 14"><circle cx="6.1" cy="6.5" r="5.15" fill="#f7b6c4"/><text x="5.6" y="9.2" font-family="'DejaVu Sans Mono','Liberation Mono',monospace" font-size="7.5" fill="#5e3038" text-anchor="middle">m</text><circle cx="9.6" cy="10.2" r="2.05" fill="#59b14f"/></svg><span class="tl" style="left:91.3px">getOvpnUserName()<span class="ex"> String</span></span></div>
<div class="tr"><svg class="ico" style="left:75.7px" width="14" height="14" viewBox="0 0 14 14"><circle cx="6.1" cy="6.5" r="5.15" fill="#f7b6c4"/><text x="5.6" y="9.2" font-family="'DejaVu Sans Mono','Liberation Mono',monospace" font-size="7.5" fill="#5e3038" text-anchor="middle">m</text><circle cx="9.6" cy="10.2" r="2.05" fill="#59b14f"/></svg><span class="tl" style="left:91.3px">getOvpnUserPassword()<span class="ex"> String</span></span></div>
<div class="tr"><svg class="ico" style="left:75.7px" width="14" height="14" viewBox="0 0 14 14"><circle cx="6.1" cy="6.5" r="5.15" fill="#f7b6c4"/><text x="5.6" y="9.2" font-family="'DejaVu Sans Mono','Liberation Mono',monospace" font-size="7.5" fill="#5e3038" text-anchor="middle">m</text><circle cx="9.6" cy="10.2" r="2.05" fill="#59b14f"/></svg><span class="tl" style="left:91.3px">setCountry(String)<span class="ex"> void</span></span></div>
<div class="tr"><svg class="ico" style="left:75.7px" width="14" height="14" viewBox="0 0 14 14"><circle cx="6.1" cy="6.5" r="5.15" fill="#f7b6c4"/><text x="5.6" y="9.2" font-family="'DejaVu Sans Mono','Liberation Mono',monospace" font-size="7.5" fill="#5e3038" text-anchor="middle">m</text><circle cx="9.6" cy="10.2" r="2.05" fill="#59b14f"/></svg><span class="tl" style="left:91.3px">setOvpn(String)<span class="ex"> void</span></span></div>
<div class="tr"><svg class="ico" style="left:75.7px" width="14" height="14" viewBox="0 0 14 14"><circle cx="6.1" cy="6.5" r="5.15" fill="#f7b6c4"/><text x="5.6" y="9.2" font-family="'DejaVu Sans Mono','Liberation Mono',monospace" font-size="7.5" fill="#5e3038" text-anchor="middle">m</text><circle cx="9.6" cy="10.2" r="2.05" fill="#59b14f"/></svg><span class="tl" style="left:91.3px">setOvpnUserName(String)<span class="ex"> void</span></span></div>
<div class="tr"><svg class="ico" style="left:75.7px" width="14" height="14" viewBox="0 0 14 14"><circle cx="6.1" cy="6.5" r="5.15" fill="#f7b6c4"/><text x="5.6" y="9.2" font-family="'DejaVu Sans Mono','Liberation Mono',monospace" font-size="7.5" fill="#5e3038" text-anchor="middle">m</text><circle cx="9.6" cy="10.2" r="2.05" fill="#59b14f"/></svg><span class="tl" style="left:91.3px">setOvpnUserPassword(String)<span class="ex"> void</span></span></div>
<div class="tr"><svg class="chv" style="left:48.6px" width="9" height="9" viewBox="0 0 9 9"><path d="M3 1 L6.5 4.5 L3 8" fill="none" stroke="#adadad" stroke-width="0.95"/></svg><svg class="ico" style="left:62.8px" width="14" height="14" viewBox="0 0 14 14"><circle cx="6.1" cy="6.5" r="5.15" fill="#9ed2e8"/><text x="5.6" y="9.2" font-family="'DejaVu Sans Mono','Liberation Mono',monospace" font-size="7.5" fill="#2f5560" text-anchor="middle">c</text><circle cx="9.6" cy="10.2" r="2.05" fill="#59b14f"/></svg><span class="tl" style="left:78.0px">ShotActivity</span></div>
<div class="tr"><svg class="chv" style="left:48.6px" width="9" height="9" viewBox="0 0 9 9"><path d="M3 1 L6.5 4.5 L3 8" fill="none" stroke="#adadad" stroke-width="0.95"/></svg><svg class="ico" style="left:62.8px" width="14" height="14" viewBox="0 0 14 14"><circle cx="6.1" cy="6.5" r="5.15" fill="#9ed2e8"/><text x="5.6" y="9.2" font-family="'DejaVu Sans Mono','Liberation Mono',monospace" font-size="7.5" fill="#2f5560" text-anchor="middle">c</text><circle cx="9.6" cy="10.2" r="2.05" fill="#59b14f"/></svg><span class="tl" style="left:78.0px">SMSActivity</span></div>
<div class="tr"><svg class="chv" style="left:48.6px" width="9" height="9" viewBox="0 0 9 9"><path d="M3 1 L6.5 4.5 L3 8" fill="none" stroke="#adadad" stroke-width="0.95"/></svg><svg class="ico" style="left:62.8px" width="14" height="14" viewBox="0 0 14 14"><circle cx="6.1" cy="6.5" r="5.15" fill="#9ed2e8"/><text x="5.6" y="9.2" font-family="'DejaVu Sans Mono','Liberation Mono',monospace" font-size="7.5" fill="#2f5560" text-anchor="middle">c</text><circle cx="9.6" cy="10.2" r="2.05" fill="#59b14f"/></svg><span class="tl" style="left:78.0px">StartActivity</span></div>
<div class="tr"><svg class="chv" style="left:48.6px" width="9" height="9" viewBox="0 0 9 9"><path d="M3 1 L6.5 4.5 L3 8" fill="none" stroke="#adadad" stroke-width="0.95"/></svg><svg class="ico" style="left:62.8px" width="14" height="14" viewBox="0 0 14 14"><circle cx="6.1" cy="6.5" r="5.15" fill="#9ed2e8"/><text x="5.6" y="9.2" font-family="'DejaVu Sans Mono','Liberation Mono',monospace" font-size="7.5" fill="#2f5560" text-anchor="middle">c</text><circle cx="9.6" cy="10.2" r="2.05" fill="#59b14f"/></svg><span class="tl" style="left:78.0px">UtilsKt</span></div>
<div class="tr"><svg class="chv" style="left:35.2px" width="9" height="9" viewBox="0 0 9 9"><path d="M3 1 L6.5 4.5 L3 8" fill="none" stroke="#adadad" stroke-width="0.95"/></svg><svg class="ico" style="left:50.0px" width="14" height="14" viewBox="0 0 14 14"><path d="M0 3.2 H4.4 L5.6 4.5 H10.9 V10.9 H0 Z" fill="#a9afb6"/><rect x="4.2" y="6.8" width="3" height="2.4" fill="#ffffff" opacity="0.8"/></svg><span class="tl" style="left:64.5px">giorgosneokleous</span></div>
<div class="tr"><svg class="chv" style="left:35.2px" width="9" height="9" viewBox="0 0 9 9"><path d="M3 1 L6.5 4.5 L3 8" fill="none" stroke="#adadad" stroke-width="0.95"/></svg><svg class="ico" style="left:50.0px" width="14" height="14" viewBox="0 0 14 14"><path d="M0 3.2 H4.4 L5.6 4.5 H10.9 V10.9 H0 Z" fill="#a9afb6"/><rect x="4.2" y="6.8" width="3" height="2.4" fill="#ffffff" opacity="0.8"/></svg><span class="tl" style="left:64.5px">google</span></div>
<div class="tr"><svg class="chv" style="left:21.8px" width="9" height="9" viewBox="0 0 9 9"><path d="M3 1 L6.5 4.5 L3 8" fill="none" stroke="#adadad" stroke-width="0.95"/></svg><svg class="ico" style="left:36.8px" width="14" height="14" viewBox="0 0 14 14"><path d="M0 3.2 H4.4 L5.6 4.5 H10.9 V10.9 H0 Z" fill="#a9afb6"/><rect x="4.2" y="6.8" width="3" height="2.4" fill="#ffffff" opacity="0.8"/></svg><span class="tl" style="left:51.0px">de.blinkt.openvpn</span></div>
<div class="tr"><svg class="chv" style="left:21.8px" width="9" height="9" viewBox="0 0 9 9"><path d="M3 1 L6.5 4.5 L3 8" fill="none" stroke="#adadad" stroke-width="0.95"/></svg><svg class="ico" style="left:36.8px" width="14" height="14" viewBox="0 0 14 14"><path d="M0 3.2 H4.4 L5.6 4.5 H10.9 V10.9 H0 Z" fill="#a9afb6"/><rect x="4.2" y="6.8" width="3" height="2.4" fill="#ffffff" opacity="0.8"/></svg><span class="tl" style="left:51.0px">defpackage</span></div>
  </div>
  <div id="tsb" class="abs"><i></i></div>
</div>
<div id="split" class="abs"><svg class="abs" style="left:0.6px;top:381.5px" width="3" height="10" viewBox="0 0 3 10"><rect x="0.3" y="0.3" width="2.2" height="1.6" fill="#c3c3c3"/><rect x="0.3" y="3.9" width="2.2" height="1.6" fill="#c3c3c3"/><rect x="0.3" y="7.5" width="2.2" height="1.6" fill="#c3c3c3"/></svg></div>
<!-- ============ tabs ============ -->
<div id="tabs" class="abs">
<svg style="left:12.9px;top:6px" width="11" height="11" viewBox="0 0 11 11"><rect x="0.9" y="0.9" width="9.2" height="9.2" fill="#fbfbfb" stroke="#808080" stroke-width="1.8"/><path d="M2.6 8.2 H8.4 V3.4 H7 V6.4 H5.8 V4.4 H4.4 V6.4 H3.4 V5.4 H2.6 Z" fill="#7c7c7c"/></svg>
<span style="left:27.6px">Summary</span>
<span class="x" style="left:78.6px">×</span>
<svg style="left:107.1px;top:6px" width="14" height="14" viewBox="0 0 14 14"><circle cx="5.6" cy="5.8" r="5.2" fill="#9ed2e8"/><text x="5.2" y="8.3" font-family="'DejaVu Sans Mono','Liberation Mono',monospace" font-size="7" fill="#3f6470" text-anchor="middle">c</text><circle cx="8.9" cy="9.4" r="2.3" fill="#59b14f"/></svg>
<span style="left:122.3px">Server</span>
<span class="x" style="left:166.8px">×</span>
<svg style="left:195.1px;top:6px" width="14" height="14" viewBox="0 0 14 14"><circle cx="5.6" cy="5.8" r="5.2" fill="#9ed2e8"/><text x="5.2" y="8.3" font-family="'DejaVu Sans Mono','Liberation Mono',monospace" font-size="7" fill="#3f6470" text-anchor="middle">c</text><circle cx="8.9" cy="9.4" r="2.3" fill="#59b14f"/></svg>
<span style="left:210.4px">MainActivity</span>
<span class="x" style="left:291.4px">×</span>
<div style="position:absolute;left:186.2px;top:22.5px;width:124.5px;height:2px;background:#3d84d6"></div>
</div>
<!-- ============ editor ============ -->
<div id="ed" class="abs">
  <div id="gut" class="abs">
<div class="gl">&nbsp;</div>
<div class="gl">&nbsp;</div>
<div class="gl">&nbsp;</div>
<div class="gl">&nbsp;</div>
<div class="gl">&nbsp;</div>
<div class="gl">&nbsp;</div>
<div class="gl">76</div>
<div class="gl">&nbsp;</div>
<div class="gl">&nbsp;</div>
<div class="gl">&nbsp;</div>
<div class="gl">&nbsp;</div>
<div class="gl">&nbsp;</div>
<div class="gl">&nbsp;</div>
<div class="gl">&nbsp;</div>
<div class="gl">&nbsp;</div>
<div class="gl">&nbsp;</div>
<div class="gl">&nbsp;</div>
<div class="gl">&nbsp;</div>
<div class="gl">&nbsp;</div>
<div class="gl">&nbsp;</div>
<div class="gl">&nbsp;</div>
<div class="gl">&nbsp;</div>
<div class="gl">&nbsp;</div>
<div class="gl">&nbsp;</div>
<div class="gl">&nbsp;</div>
<div class="gl">&nbsp;</div>
<div class="gl">&nbsp;</div>
<div class="gl">&nbsp;</div>
<div class="gl">&nbsp;</div>
<div class="gl">&nbsp;</div>
<div class="gl">622</div>
<div class="gl">&nbsp;</div>
<div class="gl">623</div>
<div class="gl">&nbsp;</div>
<div class="gl">625</div>
<div class="gl">&nbsp;</div>
<div class="gl">&nbsp;</div>
<div class="gl">630</div>
<div class="gl">631</div>
<div class="gl">632</div>
<div class="gl">633</div>
<div class="gl">&nbsp;</div>
<div class="gl">641</div>
<div class="gl">&nbsp;</div>
<div class="gl">&nbsp;</div>
<div class="gl">&nbsp;</div>
  </div>
  <div id="code" class="abs">
<div class="cl"><b class="k">import</b> java.net.MalformedURLException;</div>
<div class="cl"><b class="k">import</b> java.net.NetworkInterface;</div>
<div class="cl"><b class="k">import</b> java.net.URL;</div>
<div class="cl"><b class="k">import</b> java.util.<span class="f">Collections</span>;</div>
<div class="cl">&nbsp;</div>
<div class="cl"><i class="c">/* loaded from: classes.dex */</i></div>
<div class="cl"><b class="k">public</b> <b class="k">class</b> MainActivity <b class="k">extends</b> AppCompatActivity <span class="p">{</span></div>
<div class="cl">    <b class="k">public</b> <b class="k">static</b> <b class="k">final</b> <span class="f">String</span> TAG <span class="o">=</span> <span class="s">"vpnner"</span>;</div>
<div class="cl">    <b class="k">private</b> TextView TextView;</div>
<div class="cl">    <b class="k">public</b> ImageButton btn_tmp;</div>
<div class="cl">    <b class="k">public</b> Button btnconnect;</div>
<div class="cl">    <b class="k">private</b> CheckInternetConnection connection;</div>
<div class="cl">    <b class="k">private</b> EditText editTextInput;</div>
<div class="cl">    <b class="k">private</b> LocationCallback locationCallback;</div>
<div class="cl">    <b class="k">private</b> LocationRequest locationRequest;</div>
<div class="cl">    <b class="k">private</b> FusedLocationProviderClient mFusedLocationClient;</div>
<div class="cl">    <b class="k">public</b> TextView txtstate;</div>
<div class="cl">    <b class="k">final</b> <span class="f">String</span> Domain <span class="o">=</span> Constants.Domain;</div>
<div class="cl">    <b class="d">boolean</b> isInternet <span class="o">=</span> <b class="k">true</b>;</div>
<div class="cl">    <b class="k">private</b> <mark>Server</mark> server <span class="o">=</span> <b class="k">new</b> <mark>Server</mark><span class="p">(</span><span class="s">"United Kingdom"</span>, <span class="s">"server1.ovpn"</span>, <span class="s">"vpnuser2"</span>, <span class="s">"VpNu$3R"</span><span class="p">)</span>;</div>
<div class="cl">    <b class="k">private</b> OpenVPNThread vpnThread <span class="o">=</span> <b class="k">new</b> OpenVPNThread<span class="p">(</span><span class="p">)</span>;</div>
<div class="cl">    <b class="k">private</b> OpenVPNService vpnService <span class="o">=</span> <b class="k">new</b> OpenVPNService<span class="p">(</span><span class="p">)</span>;</div>
<div class="cl">    <b class="d">boolean</b> vpnStart <span class="o">=</span> <b class="k">false</b>;</div>
<div class="cl">    <b class="k">public</b> <b class="d">boolean</b> is_run <span class="o">=</span> <b class="k">false</b>;</div>
<div class="cl">    <b class="d">boolean</b> networkStatus <span class="o">=</span> <b class="k">false</b>;</div>
<div class="cl">    <b class="k">final</b> <span class="f">String</span> <mark>Server</mark>_TargetLog <span class="o">=</span> Constants.<mark>Server</mark>_TargetLog;</div>
<div class="cl">    <b class="k">private</b> <b class="d">double</b> wayLatitude <span class="o">=</span> <span class="n">0.0d</span>;</div>
<div class="cl">    <b class="k">private</b> <b class="d">double</b> wayLongitude <span class="o">=</span> <span class="n">0.0d</span>;</div>
<div class="cl">    BroadcastReceiver broadcastReceiver <span class="o">=</span> <b class="k">new</b> BroadcastReceiver<span class="p">(</span><span class="p">)</span> <span class="p">{</span> <i class="c">// from class: com.example.vpnner.MainActivity.5</i></div>
<div class="cl">        <span class="a">@Override</span> <i class="c">// android.content.BroadcastReceiver</i></div>
<div class="cl">        <b class="k">public</b> <b class="d">void</b> onReceive<span class="p">(</span>Context context, Intent intent<span class="p">)</span> <span class="p">{</span></div>
<div class="cl">            <b class="k">try</b> <span class="p">{</span></div>
<div class="cl">                MainActivity.<b class="k">this</b>.setStatus<span class="p">(</span>intent.getStringExtra<span class="p">(</span><span class="s">"state"</span><span class="p">)</span><span class="p">)</span>;</div>
<div class="cl">            <span class="p">}</span> <b class="k">catch</b> <span class="p">(</span><span class="f">Exception</span> e<span class="p">)</span> <span class="p">{</span></div>
<div class="cl">                e.printStackTrace<span class="p">(</span><span class="p">)</span>;</div>
<div class="cl">            <span class="p">}</span></div>
<div class="cl">            <b class="k">try</b> <span class="p">{</span></div>
<div class="cl">                intent.getStringExtra<span class="p">(</span><span class="s">"duration"</span><span class="p">)</span>;</div>
<div class="cl">                intent.getStringExtra<span class="p">(</span><span class="s">"lastPacketReceive"</span><span class="p">)</span>;</div>
<div class="cl">                intent.getStringExtra<span class="p">(</span><span class="s">"byteIn"</span><span class="p">)</span>;</div>
<div class="cl">                intent.getStringExtra<span class="p">(</span><span class="s">"byteOut"</span><span class="p">)</span>;</div>
<div class="cl">            <span class="p">}</span> <b class="k">catch</b> <span class="p">(</span><span class="f">Exception</span> e2<span class="p">)</span> <span class="p">{</span></div>
<div class="cl">                e2.printStackTrace<span class="p">(</span><span class="p">)</span>;</div>
<div class="cl">            <span class="p">}</span></div>
<div class="cl">        <span class="p">}</span></div>
<div class="cl">    <span class="p">}</span>;</div>
  </div>
</div>
<!-- ============ annotation ============ -->
<div id="box" class="abs"></div>
<svg id="arrow" class="abs" width="1042" height="711" viewBox="0 0 1042 711"><path d="M785.4 313 L769.6 347.2" stroke="#ff0000" stroke-width="3.2" fill="none"/><path d="M760.2 367 L762.4 343.8 L776.6 350.6 Z" fill="#ff0000"/></svg>
</body>
</html>
